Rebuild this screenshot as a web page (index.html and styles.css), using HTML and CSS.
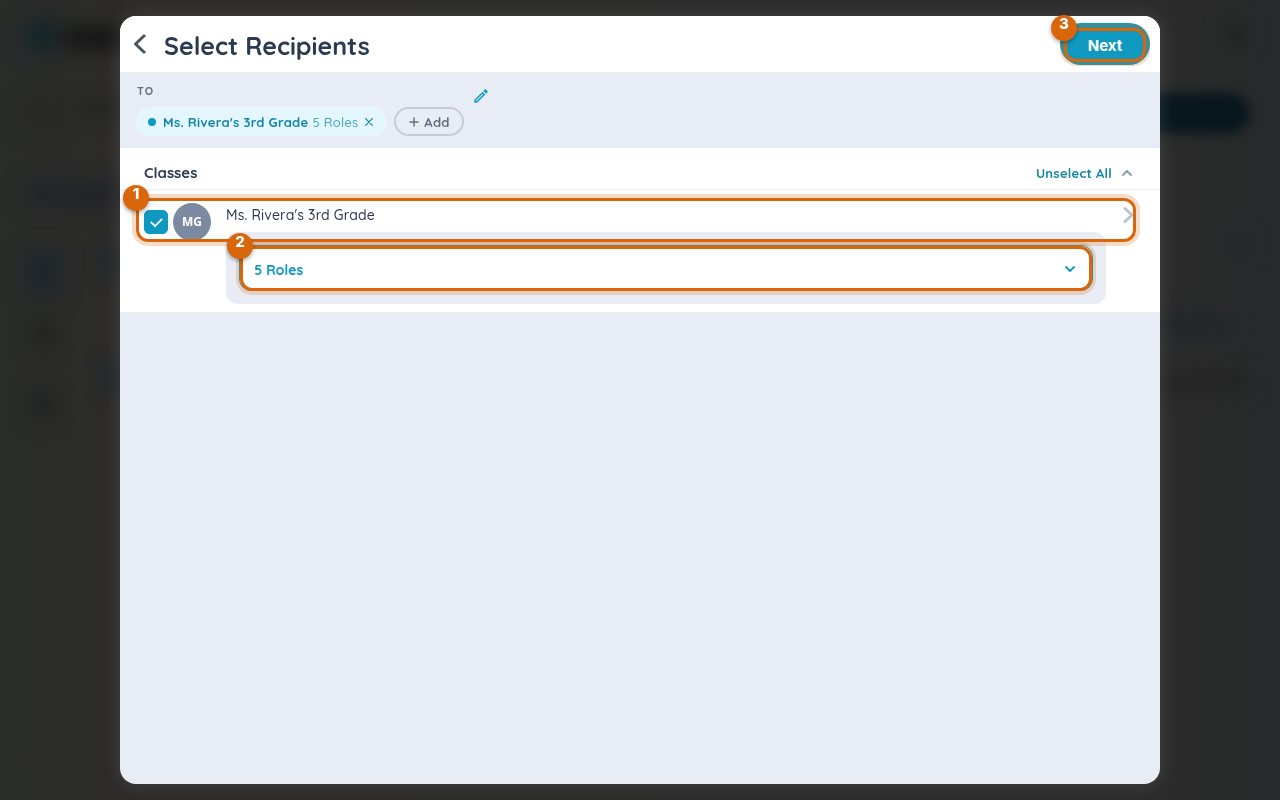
FILE: index.html
```html
<!DOCTYPE html>
<html lang="en">
  <head>
    <meta charset="UTF-8" />
    <meta name="viewport" content="width=device-width, initial-scale=1.0" />
    <title>Select Recipients</title>
    <link rel="stylesheet" href="styles.css">
  </head>
  <body>
    <div class="backdrop" aria-hidden="true">
      <div class="blob logo"></div>
      <div class="blob brand"></div>
      <div class="blob crumb"></div>
      <div class="blob crumb-text"></div>
      <div class="blob search"></div>
      <div class="blob nav-active"></div>
      <div class="blob nav-two"></div>
      <div class="blob nav-three"></div>
      <div class="blob tab-one"></div>
      <div class="blob tab-two"></div>
      <div class="blob user"></div>
      <div class="blob compose"></div>
      <div class="blob link-one"></div>
      <div class="blob link-two"></div>
      <div class="blob link-three"></div>
    </div>

    <div class="overlay">
      <main class="modal" role="dialog" aria-labelledby="title">
        <header class="modal-header">
          <button class="back" aria-label="Back">
            <svg width="14" height="22" viewBox="0 0 14 22"><path d="M12 2 2.500 11l9.500 9" /></svg>
          </button>
          <h1 id="title">Select Recipients</h1>
          <div class="next-wrap">
            <button class="next">Next</button>
            <div class="highlight"><span class="step">3</span></div>
          </div>
        </header>

        <section class="to">
          <div class="to-list">
            <div class="to-label">TO</div>
            <div class="chips">
              <div class="chip">
                <span class="dot"></span>
                <b>Ms. Rivera's 3rd Grade</b>
                <span class="chip-roles">5 Roles</span>
                <button class="remove" aria-label="Remove">
                  <svg width="8" height="8" viewBox="0 0 8 8"><path d="M.7.7l6.600 6.600M7.300.7.7 7.300" /></svg>
                </button>
              </div>
              <button class="add">
                <svg width="10" height="10" viewBox="0 0 10 10"><path d="M5 1v8M1 5h8" /></svg>
                Add
              </button>
            </div>
          </div>
          <button class="edit" aria-label="Edit recipients">
            <svg width="18" height="18" viewBox="0 0 24 24"><path d="M14.060 9.020l.92.92L5.920 19H5v-.92l9.060-9.060M17.660 3c-.25 0-.51.1-.7.290l-1.830 1.830 3.750 3.750 1.830-1.830c.390-.390.390-1.020 0-1.410l-2.340-2.340c-.2-.2-.450-.290-.710-.290zm-3.600 3.190L3 17.250V21h3.750L17.810 9.940l-3.750-3.750z" /></svg>
          </button>
        </section>

        <section class="classes">
          <div class="classes-header">
            <h2>Classes</h2>
            <button class="unselect">Unselect All</button>
            <button class="collapse" aria-label="Collapse classes">
              <svg width="10" height="8" viewBox="0 0 10 8"><path d="M1 6 5 2l4 4" /></svg>
            </button>
          </div>

          <div class="class-item">
            <div class="class-lead">
              <input type="checkbox" id="class-1" checked />
              <span class="avatar">MG</span>
            </div>
            <div class="class-body">
              <div class="class-name">
                <label for="class-1">Ms. Rivera's 3rd Grade</label>
                <svg class="go" width="13" height="18" viewBox="0 0 13 18"><path d="M2 2.500 9 9l-7 6.500" /></svg>
              </div>
              <div class="roles-panel">
                <button class="roles">
                  5 Roles
                  <svg width="10" height="8" viewBox="0 0 10 8"><path d="M1 1l4 4 4-4" /></svg>
                </button>
                <div class="highlight"><span class="step">2</span></div>
              </div>
            </div>
            <div class="highlight"><span class="step">1</span></div>
          </div>
        </section>
      </main>
    </div>
  </body>
</html>
```
FILE: styles.css
```css
* {
  padding: 0;
  margin: 0;
  box-sizing: border-box;
}
body {
  background: #2a2b2a;
  color: #2c3a4f;
  font-family: Quicksand, Lato, "Liberation Sans", sans-serif;
  font-size: 14px;
  overflow: hidden;
}
button {
  background: none;
  border: none;
  font: inherit;
  letter-spacing: inherit;
  color: inherit;
  cursor: pointer;
}
svg {
  display: block;
  fill: none;
  stroke: currentColor;
  stroke-linecap: round;
  stroke-linejoin: round;
}

/* blurred page behind the dialog */
.backdrop {
  position: fixed;
  inset: 0;
  background: linear-gradient(90deg, #2a2c2a, #2c2b2a 9%, #2b2b2b 90%, #28292a);
}
.blob {
  position: absolute;
  filter: blur(10px);
  border-radius: 8px;
}
.logo {
  left: 24px;
  top: 20px;
  width: 34px;
  height: 32px;
  background: #15262a;
}
.brand {
  left: 62px;
  top: 28px;
  width: 70px;
  height: 20px;
  background: #121212;
}
.crumb {
  left: 20px;
  top: 100px;
  width: 42px;
  height: 30px;
  background: #262726;
}
.crumb-text {
  left: 80px;
  top: 100px;
  width: 60px;
  height: 16px;
  background: #222322;
}
.search {
  left: 26px;
  top: 180px;
  width: 110px;
  height: 26px;
  background: #232427;
}
.nav-active {
  left: 24px;
  top: 250px;
  width: 38px;
  height: 44px;
  background: #1f272a;
}
.nav-two {
  left: 32px;
  top: 320px;
  width: 22px;
  height: 30px;
  background: #212221;
}
.nav-three {
  left: 32px;
  top: 390px;
  width: 22px;
  height: 30px;
  background: #202122;
}
.tab-one {
  left: 106px;
  top: 244px;
  width: 20px;
  height: 34px;
  background: #1c252b;
}
.tab-two {
  left: 106px;
  top: 362px;
  width: 20px;
  height: 30px;
  background: #1c252b;
}
.user {
  right: 32px;
  top: 22px;
  width: 24px;
  height: 24px;
  background: #222323;
}
.compose {
  right: 30px;
  top: 93px;
  width: 130px;
  height: 40px;
  border-radius: 20px;
  background: #07171c;
  filter: blur(6px);
}
.link-one {
  right: 28px;
  top: 236px;
  width: 26px;
  height: 18px;
  background: #202728;
}
.link-two {
  right: 44px;
  top: 315px;
  width: 80px;
  height: 18px;
  background: #1f2628;
}
.link-three {
  right: 28px;
  top: 374px;
  width: 100px;
  height: 18px;
  background: #232324;
}

.overlay {
  position: relative;
  display: flex;
  min-height: 100vh;
  padding: 16px 120px;
}
.modal {
  flex: 1;
  background: #e8edf5;
  border-radius: 16px;
  box-shadow: 0 0 20px rgba(255, 255, 255, 0.13);
}

.modal-header {
  display: flex;
  align-items: center;
  height: 56px;
  padding: 0 10px 0 13px;
  background: #fff;
  border-radius: 16px 16px 0 0;
}
.back {
  color: #4c545c;
}
.back svg {
  stroke-width: 3;
  stroke-linecap: butt;
}
h1 {
  flex: 1;
  padding: 4px 17px 0;
  font-size: 25px;
  line-height: 32px;
  font-weight: 700;
}
.next-wrap {
  position: relative;
}
.next {
  display: block;
  width: 90px;
  height: 42px;
  padding-top: 3px;
  border-radius: 21px;
  background: #0f99c1;
  color: #fff;
  font-family: Inter, sans-serif;
  font-size: 15px;
  font-weight: 700;
}

/* numbered walkthrough marks */
.highlight {
  position: absolute;
  border: 3px solid #d9660b;
  border-radius: 12px;
  box-shadow: 0 0 0 4px rgba(217, 102, 11, 0.22);
  pointer-events: none;
}
.step {
  position: absolute;
  left: -16px;
  top: -16px;
  width: 26px;
  height: 26px;
  border-radius: 50%;
  background: #d9660b;
  box-shadow: 0 2px 4px rgba(0, 0, 0, 0.35);
  color: #fff;
  font: 800 15px/18px Inter, sans-serif;
  text-align: center;
}
.next-wrap .highlight {
  inset: 5px 4px 3px;
}

.to {
  display: flex;
  align-items: flex-start;
  height: 76px;
  padding: 12px 16px;
}
.to-label {
  padding-left: 1px;
  font-size: 11px;
  line-height: 14px;
  font-weight: 700;
  letter-spacing: 1px;
  color: #626d80;
}
.chips {
  display: flex;
  gap: 7px;
  margin-top: 9px;
}
.chip,
.add,
.unselect {
  font-size: 13px;
  letter-spacing: 0.02em;
}
.chip,
.add {
  display: flex;
  align-items: center;
  height: 29px;
  border-radius: 15px;
}
.chip {
  padding: 0 14px 0 12px;
  background: #e4f7fe;
  color: #1285a5;
}
.dot {
  width: 8px;
  height: 8px;
  margin-right: 7px;
  border-radius: 50%;
  background: #0f99c1;
}
.chip-roles {
  margin: 0 7px 0 4px;
  color: #4ba5bd;
  font-weight: 500;
}
.remove svg {
  stroke-width: 1.2;
}
.add {
  gap: 5px;
  padding: 0 12px 0 13px;
  border: 2px solid #c5cddb;
  color: #626d80;
  font-weight: 700;
}
.add svg {
  stroke-width: 1.4;
}
.edit {
  margin: 3px 0 0 8px;
  color: #0f99c1;
}
.edit svg {
  fill: currentColor;
  stroke: none;
}

.classes {
  padding-bottom: 8px;
  background: #fff;
}
.classes-header {
  display: flex;
  align-items: center;
  height: 42px;
  padding: 8px 28px 0 24px;
  border-bottom: 1px solid #edeff2;
}
h2 {
  flex: 1;
  font-size: 15px;
  font-weight: 700;
}
.unselect {
  font-weight: 700;
  color: #1285a5;
}
.collapse {
  margin-left: 10px;
  color: #8d99ad;
}
.collapse svg,
.roles svg {
  stroke-width: 1.8;
}

.class-item {
  position: relative;
  display: flex;
  padding: 8px 24px 0;
}
.class-lead {
  display: flex;
  align-items: center;
  gap: 5px;
  width: 82px;
  height: 48px;
}
.class-lead input {
  appearance: none;
  display: grid;
  place-items: center;
  width: 24px;
  height: 24px;
  border-radius: 5px;
  border: 1px solid #0f99c1;
}
.class-lead input:checked {
  background: #0f99c1;
}
.class-lead input:checked::after {
  content: "";
  width: 11px;
  height: 6px;
  margin-bottom: 2px;
  border: solid #fff;
  border-width: 0 0 2px 2px;
  transform: rotate(-45deg) scale(0.85);
}
.avatar {
  width: 38px;
  height: 38px;
  border-radius: 50%;
  background: #7b89a1;
  color: #fff;
  font: 700 12px/38px "Noto Sans", sans-serif;
  text-align: center;
}
.class-body {
  flex: 1;
}
.class-name {
  display: flex;
  align-items: center;
  justify-content: space-between;
  height: 34px;
  font-weight: 500;
  letter-spacing: 0.01em;
}
.go {
  color: #b9c3d6;
  stroke-width: 3;
}
.class-item > .highlight {
  left: 16px;
  right: 24px;
  top: 8px;
  height: 44px;
}
.roles-panel {
  position: relative;
  margin-right: 30px;
  padding: 13px;
  border-radius: 12px;
  background: #e8edf5;
}
.roles {
  display: flex;
  align-items: center;
  justify-content: space-between;
  width: 100%;
  height: 46px;
  padding: 3px 17px 0 14px;
  border: 1px solid #0f99c1;
  border-radius: 12px;
  background: #fff;
  color: #0f99c1;
  font-weight: 700;
}
.roles-panel .highlight {
  z-index: 1;
  inset: 14px 14px 13px;
}
```
